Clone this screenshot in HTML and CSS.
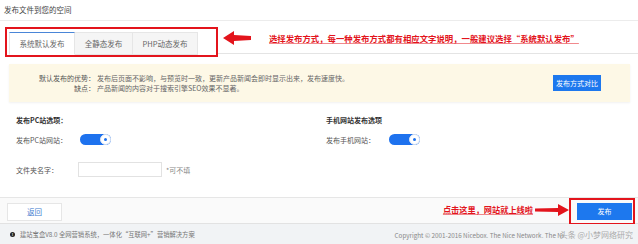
FILE: index.html
```html
<!DOCTYPE html>
<html lang="zh">
<head>
<meta charset="utf-8">
<link rel="stylesheet" href="styles.css">
</head>
<body>
<div class="page">
  <div class="title">发布文件到您的空间</div>

  <div class="tabrow">
    <div class="tabbox">
      <div class="tabs">
        <div class="tab active">系统默认发布</div>
        <div class="tab">全静态发布</div>
        <div class="tab">PHP动态发布</div>
      </div>
    </div>
    <div class="tabnote">
      <svg class="arrow-left" width="28" height="14" viewBox="0 0 28 14"><path d="M0 7 L11 0 L11 4 L28 5 L28 9 L11 10 L11 14 Z" fill="#e3141c"/></svg>
      <span class="note">选择发布方式，每一种发布方式都有相应文字说明，一般建议选择“系统默认发布”</span>
    </div>
  </div>

  <div class="infobox">
    <div class="info-lines">
      <div class="info-row"><span class="info-label">默认发布的优势：</span><span>发布后页面不影响，与预览时一致，更新产品新闻会即时显示出来，发布速度快。</span></div>
      <div class="info-row"><span class="info-label">缺点：</span><span>产品新闻的内容对于搜索引擎SEO效果不显著。</span></div>
    </div>
    <button class="btn-blue btn-compare">发布方式对比</button>
  </div>

  <div class="options">
    <div class="col">
      <div class="col-title">发布PC站选项：</div>
      <div class="field"><span class="label">发布PC站网站：</span><span class="toggle"><span class="knob"></span></span></div>
      <div class="field field-input"><span class="label">文件夹名字：</span><span class="input"></span><span class="hint">*可不填</span></div>
    </div>
    <div class="col">
      <div class="col-title">手机网站发布选项</div>
      <div class="field"><span class="label">发布手机网站：</span><span class="toggle"><span class="knob"></span></span></div>
    </div>
  </div>

  <div class="actions">
    <button class="btn-back">返回</button>
    <div class="actions-right">
      <span class="note">点击这里，网站就上线啦</span>
      <svg class="arrow-right" width="34" height="12" viewBox="0 0 34 12"><path d="M34 6 L23 0 L23 4 L0 4.5 L0 7.5 L23 8 L23 12 Z" fill="#e3141c"/></svg>
      <div class="publish-box"><button class="btn-blue btn-publish">发布</button></div>
    </div>
  </div>

  <div class="footer">
    <div class="foot-left"><span class="info-icon">!</span>建站宝盒V8.0 全网营销系统，一体化“互联网+”营销解决方案</div>
    <div class="foot-right">Copyright © 2001-2016 Nicebox. The Nice Network. The Ni<span class="wm">头条 @小梦网络研究</span></div>
  </div>
</div>
</body>
</html>
```

FILE: styles.css
```css
* { box-sizing: border-box; margin: 0; padding: 0; }
html, body { background: #fff; }
body { margin: 0; }
.page {
  width: 638px;
  height: 244px;
  overflow: hidden;
  font-family: "Noto Sans CJK SC", "Liberation Sans", sans-serif;
  font-size: 7px;
  color: #555;
  display: flex;
  flex-direction: column;
}
.title {
  height: 21px;
  line-height: 20px;
  padding-left: 4px;
  font-size: 7.5px;
  color: #444;
  border-bottom: 1px solid #ececec;
}
.tabrow {
  display: flex;
  margin-top: 6px;
  height: 30px;
}
.tabbox {
  margin-left: 5px;
  width: 213px;
  height: 30px;
  border: 2px solid #e3141c;
  padding: 3px 0 0 2px;
}
.tabs { display: flex; height: 23px; }
.tab {
  background: #f5f5f5;
  border: 1px solid #e6e6e6;
  border-left: none;
  display: flex;
  align-items: center;
  justify-content: center;
  color: #666;
  font-size: 7.5px;
  width: 58px;
}
.tab:nth-child(3) { width: 65px; }
.tab.active {
  width: 66px;
  background: #fff;
  border-left: 1px solid #e6e6e6;
  border-top: 1px solid #4a86d8;
  border-bottom-color: #fff;
}
.tabnote {
  flex: 1;
  height: 27px;
  border-bottom: 1px solid #e4e4e4;
  display: flex;
  align-items: center;
  padding-left: 5px;
  padding-bottom: 4px;
}
.arrow-left { margin-right: 18px; }
.note {
  color: #e3141c;
  font-weight: bold;
  font-size: 8.4px;
  text-decoration: underline;
  text-decoration-color: rgba(227,20,28,0.5);
  white-space: nowrap;
}
.infobox {
  margin: 7px 8px 0 9px;
  height: 38px;
  background: #fdf8e6;
  box-shadow: 0 1px 2px rgba(0,0,0,0.06);
  display: flex;
  align-items: center;
  justify-content: space-between;
  padding-right: 29px;
}
.info-lines { display: flex; flex-direction: column; gap: 1px; padding-top: 1px; }
.info-row { display: flex; line-height: 9px; white-space: nowrap; color: #666; }
.info-label { width: 88px; text-align: right; padding-right: 2px; color: #555; }
.btn-blue {
  background: #1d78ee;
  color: #fff;
  border: none;
  font-family: inherit;
  font-size: 7px;
}
.btn-compare { width: 48px; height: 16px; margin-top: 0; }
.options {
  display: flex;
  padding-top: 13px;
  height: 96px;
  border-bottom: 1px solid #e6e6e6;
}
.col { display: flex; flex-direction: column; }
.col:first-child { padding-left: 16px; width: 326px; }
.col-title { color: #333; font-weight: bold; line-height: 10px; font-size: 7px; }
.field { display: flex; align-items: center; margin-top: 9px; height: 11px; }
.label { width: 64px; color: #555; }
.col:last-child .label { width: 63px; }
.toggle {
  width: 31px;
  height: 11px;
  border-radius: 6px;
  background: #1e72ee;
  position: relative;
  display: block;
}
.knob {
  position: absolute;
  right: 0;
  top: 0;
  width: 11px;
  height: 11px;
  border-radius: 50%;
  background: #fff;
  border: 1px solid #dfe6f2;
}
.knob::after {
  content: "";
  position: absolute;
  left: 3px;
  top: 3px;
  width: 3px;
  height: 3px;
  border-radius: 50%;
  background: #1e72ee;
}
.field-input { margin-top: 17px; height: 15px; }
.field-input .label { width: 62px; }
.input {
  display: block;
  width: 84px;
  height: 15px;
  border: 1px solid #e2e2e2;
  background: #fff;
}
.hint { margin-left: 4px; color: #888; }
.actions {
  height: 26px;
  background: #fafafa;
  border-bottom: 1px solid #e2e2e2;
  display: flex;
  align-items: center;
  justify-content: space-between;
  padding-left: 7px;
  padding-right: 3px;
}
.btn-back {
  width: 55px;
  height: 18px;
  background: #fff;
  border: 1px solid #e6e6e6;
  color: #3f7ccf;
  font-family: inherit;
  font-size: 7.5px;
  margin-top: 2px;
}
.actions-right { display: flex; align-items: center; }
.actions-right .note { font-size: 8.2px; margin-right: 2px; margin-bottom: 4px; }
.arrow-right { margin-bottom: 2px; }
.publish-box {
  border: 2px solid #e3141c;
  width: 66px;
  height: 27px;
  padding: 3px 2px 0 6px;
  margin-top: 1px;
}
.btn-publish { width: 55px; height: 17px; }
.footer {
  flex: 1;
  background: #f1f3f5;
  display: flex;
  align-items: center;
  justify-content: space-between;
  padding-left: 10px;
  padding-right: 5px;
  font-size: 6.3px;
  color: #777;
}
.foot-left { display: flex; align-items: center; white-space: nowrap; }
.info-icon {
  width: 5px;
  height: 5px;
  border-radius: 50%;
  background: #222;
  color: #fff;
  font-size: 4px;
  line-height: 5px;
  text-align: center;
  margin-right: 5px;
  font-weight: bold;
}
.foot-right { white-space: nowrap; color: #888; }
.wm { color: #999; font-size: 8px; margin-left: -4px; opacity: 0.8; }
```
